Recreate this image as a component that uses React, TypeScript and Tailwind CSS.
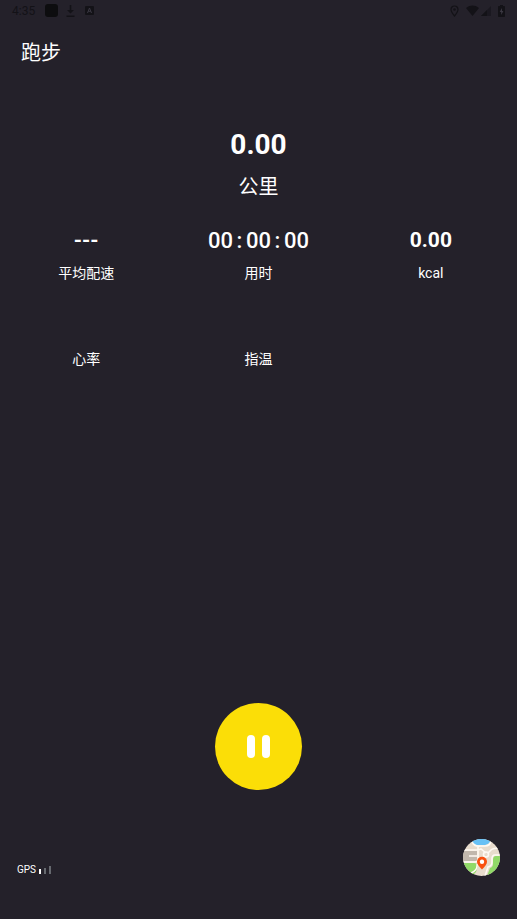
import type { ReactNode } from "react";

interface StatProps {
  label: string;
  children?: ReactNode;
}

function Stat({ label, children }: StatProps) {
  return (
    <div className="flex flex-col items-center">
      <div className="h-8 flex items-center text-[21px] font-bold">{children}</div>
      <p className="mt-[6px] text-sm leading-5">{label}</p>
    </div>
  );
}

function Timer({ value }: { value: string }) {
  const [hours, minutes, seconds] = value.split(":");
  return (
    <div className="flex text-[22px] leading-6 font-medium">
      <span>{hours}</span>
      <span className="w-[13px] text-center">:</span>
      <span>{minutes}</span>
      <span className="w-[13px] text-center">:</span>
      <span>{seconds}</span>
    </div>
  );
}

function StatusBar() {
  return (
    <div className="h-[21px] flex items-center justify-between px-3 text-[#131217]">
      <div className="flex items-center">
        <span className="text-xs">4:35</span>
        <span className="ml-[10px] size-[13px] rounded-[3px] bg-[#0d0d0f]" />
        <svg className="ml-2 w-[9px] h-3" viewBox="0 0 9 12" fill="currentColor">
          <path d="M3.7 0h1.6v5H8L4.5 8.5 1 5h2.7zM.5 10.5h8V12h-8z" />
        </svg>
        <svg className="ml-[10px] size-[9px]" viewBox="0 0 9 9">
          <rect width="9" height="9" rx="1" fill="currentColor" />
          <path d="M2.5 7l2-5 2 5M3.2 5.3h2.6" fill="none" stroke="#3a3742" strokeWidth="1" />
        </svg>
      </div>
      <div className="flex items-center">
        <svg className="w-[9px] h-3" viewBox="0 0 9 12" fill="none" stroke="currentColor">
          <path d="M4.5 11C2.3 8.3 1 6.2 1 4.5a3.5 3.5 0 0 1 7 0C8 6.2 6.7 8.3 4.5 11z" strokeWidth="1.2" />
          <circle cx="4.5" cy="4.5" r="1.3" fill="currentColor" stroke="none" />
        </svg>
        <svg className="ml-[7px] w-[13px] h-[11px]" viewBox="0 0 13 11" fill="currentColor">
          <path d="M0 3C3.8-.3 9.2-.3 13 3L6.5 11z" />
        </svg>
        <svg className="ml-[2px] size-[10px]" viewBox="0 0 10 10" fill="currentColor">
          <path d="M0 10L10 0v10z" opacity=".55" />
          <path d="M0 10l6-6v6z" />
        </svg>
        <svg className="ml-[7px] w-[7px] h-3" viewBox="0 0 7 12">
          <path d="M2 1V0h3v1h1.3q.7 0 .7.7v9.600q0 .7-.7.7H.7q-.7 0-.7-.7V1.700Q0 1 .7 1z" fill="currentColor" />
          <path d="M4 3L1.700 7H3.200v3L5.400 6H4z" fill="#3b3842" />
        </svg>
      </div>
    </div>
  );
}

function MapIcon() {
  return (
    <svg className="size-[37px] rounded-full" viewBox="0 0 37 37">
      <rect width="37" height="37" fill="#e8dccd" />
      <path d="M9 0h18v3q-2 3-5 3h-8q-4 0-5-3z" fill="#68c1f5" />
      <path d="M0 12h14v10H0z" fill="#c1b7ac" />
      <path d="M0 24h11q3 0 4 3l-2 6-4 4H0z" fill="#91d968" />
      <path d="M37 17h-4q-3 0-3 4v4q0 3-3 4l-3 8h13z" fill="#91d968" />
      <g fill="none" stroke="#fffaf3" strokeWidth="1.600">
        <path d="M0 11h13q3 0 5-1l5 4M9 3q3 5 8 4h5q5 0 6-5M15 8v12q0 3-3 3H0" />
        <path d="M14 17H6M25 14l3-3q2-2 9-2M21 18l-5 4M37 16h-5q-3 0-3 4v3q0 4-4 5l-3 9M8 34q7-3 6-9" />
        <circle cx="23" cy="15.500" r="2.500" />
      </g>
      <path d="M19 30.500c-3.200-3.300-5-5.300-5-7.800a5 5 0 0 1 10 0c0 2.500-1.800 4.500-5 7.800z" fill="#f9500f" />
      <circle cx="19" cy="22.700" r="2.200" fill="#fff" />
    </svg>
  );
}

export default function App() {
  return (
    <div className="min-h-screen flex flex-col bg-[#24212a] text-white font-[Roboto,'Noto_Sans_CJK_SC',sans-serif]">
      <StatusBar />

      <header className="h-16 flex items-center px-[21px]">
        <h1 className="text-xl">跑步</h1>
      </header>

      <main className="flex-1 flex flex-col pt-10">
        {/* Distance */}
        <div className="flex flex-col items-center">
          <p className="text-[28px] leading-10 font-bold">0.00</p>
          <p className="mt-2 text-xl leading-7">公里</p>
        </div>

        {/* Stats */}
        <div className="mt-6 grid grid-cols-3 gap-y-7">
          <Stat label="平均配速">---</Stat>
          <Stat label="用时">
            <Timer value="00:00:00" />
          </Stat>
          <Stat label="kcal">0.00</Stat>
          <Stat label="心率" />
          <Stat label="指温" />
        </div>

        <button
          type="button"
          aria-label="暂停"
          className="mt-auto mx-auto size-[87px] rounded-full bg-[#fbde07] flex items-center justify-center gap-[7px]"
        >
          <span className="w-2 h-[23px] rounded-full bg-white" />
          <span className="w-2 h-[23px] rounded-full bg-white" />
        </button>
      </main>

      <footer className="mt-[49px] pb-[43px] px-[17px] flex items-end justify-between">
        <div className="flex items-end gap-[3px]">
          <span className="text-[10px] leading-3">GPS</span>
          <span className="flex items-end gap-[3px] pb-[2px]">
            <span className="w-[2px] h-[5px] bg-white" />
            <span className="w-[2px] h-[6px] bg-[#66696f]" />
            <span className="w-[2px] h-2 bg-[#66696f]" />
          </span>
        </div>
        <button type="button" aria-label="地图">
          <MapIcon />
        </button>
      </footer>
    </div>
  );
}
